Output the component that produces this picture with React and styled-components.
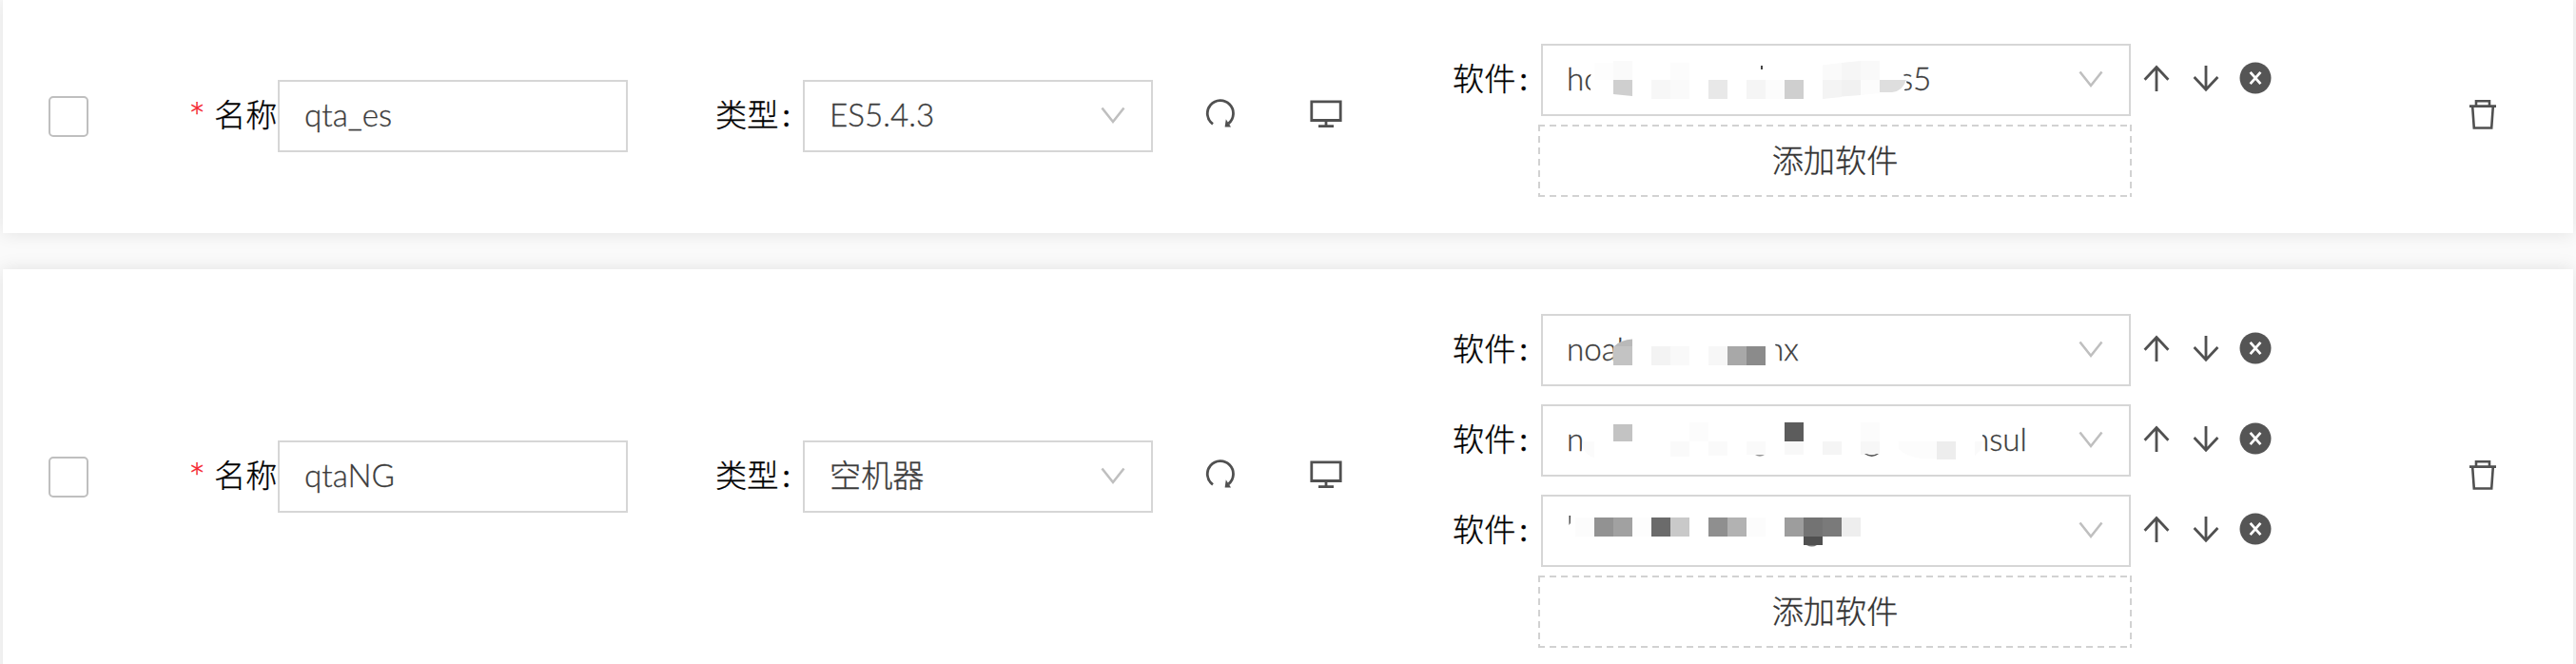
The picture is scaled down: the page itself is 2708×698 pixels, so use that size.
import React from 'react';
import styled, { createGlobalStyle } from 'styled-components';

const Global = createGlobalStyle`
  * { box-sizing: border-box; }
  html, body { margin: 0; background: #f9f9f9; }
  body { overflow: hidden; }
`;

const Page = styled.main`
  width: 2708px;
  height: 698px;
  padding: 0 3px;
  display: flex;
  flex-direction: column;
  gap: 38px;
  overflow: hidden;
  background: #fafafa;
  color: #3c3c3c;
  font-family: Lato, 'Noto Sans CJK SC', sans-serif;
  font-size: 33.2px;
  font-weight: 300;
  line-height: 40px;
  -webkit-text-stroke: 0.3px;
`;

const Card = styled.section`
  flex: none;
  height: ${(p) => p.$height}px;
  padding: 0 80px ${(p) => p.$height % 2}px 48px;
  display: flex;
  align-items: center;
  background: #fff;
  box-shadow: 0 0 18px rgba(0, 0, 0, 0.1);
`;

const Checkbox = styled.span`
  flex: none;
  width: 42px;
  height: 43px;
  margin-right: 106px;
  border: 2px solid #bfbfbf;
  border-radius: 5px;
`;

const Label = styled.label`
  flex: none;
  width: ${(p) => p.$width}px;
  padding: 0 0 5px ${(p) => p.$indent || 0}px;
  display: flex;
  white-space: pre;
  color: #000;
`;

const Required = styled.span`
  width: 27px;
  margin-left: -1px;
  padding-top: 4px;
  height: 40px;
  color: #f5222d;
  font-size: 43px;
`;

const Colon = styled.span`
  margin-left: 4px;
  font-weight: 400;
`;

const Field = styled.div`
  flex: none;
  position: relative;
  width: ${(p) => p.$width}px;
  height: 76px;
  padding: 0 27px 0 ${(p) => p.$indent || 26}px;
  display: flex;
  align-items: center;
  justify-content: space-between;
  border: 2px solid #d6d6d6;
`;

const Value = styled.span`
  white-space: pre;
  padding-bottom: 5px;
`;

const Pieces = styled.span`
  display: flex;
  white-space: pre;
  padding-bottom: 5px;
`;

const Piece = styled.span`
  flex: none;
  width: ${(p) => p.$width}px;
`;

const Mosaic = styled.svg`
  position: absolute;
  left: -2px;
  top: -2px;
  pointer-events: none;
`;

const Tools = styled.div`
  flex: none;
  display: flex;
  align-items: center;
  gap: 78px;
  width: 315px;
  padding: 0 0 6px 55px;
`;

const Software = styled.div`
  flex: none;
  display: flex;
  flex-direction: column;
  padding-top: 9px;
`;

const SoftwareRow = styled.div`
  display: flex;
  align-items: center;
  margin-bottom: ${(p) => (p.$last ? 9 : 19)}px;
`;

const RowActions = styled.div`
  display: flex;
  align-items: center;
  gap: 18px;
  padding: 0 0 4px 10px;
`;

const AddButton = styled.button`
  --dash: #d2d2d2 0 7px, transparent 7px 12px;
  width: 624px;
  height: 76px;
  margin-left: 90px;
  padding: 0 0 3px;
  border: 0;
  background:
    repeating-linear-gradient(90deg, var(--dash)) top / 100% 2px no-repeat,
    repeating-linear-gradient(90deg, var(--dash)) bottom / 100% 2px no-repeat,
    repeating-linear-gradient(180deg, var(--dash)) left / 2px 100% no-repeat,
    repeating-linear-gradient(180deg, var(--dash)) right / 2px 100% no-repeat,
    #fff;
  color: #333;
  font: inherit;
`;

const Remove = styled.div`
  margin-left: auto;
  display: flex;
  padding-bottom: 5px;
`;

const Icon = styled.svg`
  display: block;
  flex: none;
  fill: none;
  stroke: ${(p) => p.$color || '#505050'};
  stroke-width: ${(p) => p.$stroke || 2.6};
`;

const Chevron = () => (
  <Icon width="26" height="20" viewBox="0 0 26 20" $color="#bfbfbf" $stroke={2.6}>
    <path d="M1.5 1.5 L13 16 L24.5 1.5" />
  </Icon>
);

const ReloadIcon = () => (
  <Icon width="32" height="32" viewBox="0 0 32 32" $stroke={2.8}>
    <path d="M8 27.3 A13.6 13.6 0 1 1 24.4 26.8" />
    <path d="M21.8 22.2 L27 30.6 L20.6 30.6 Z" fill="#505050" stroke="none" />
  </Icon>
);

const MonitorIcon = () => (
  <Icon width="34" height="32" viewBox="0 0 34 32" $stroke={2.8}>
    <path d="M1.8 3.8 H32.2 V23.5 H1.8 Z M17 23.5 V29 M9 29.6 H25" />
  </Icon>
);

const ArrowUp = () => (
  <Icon width="34" height="34" viewBox="0 0 34 34" $stroke={2.8}>
    <path d="M17 31 V5 M4.6 18.8 L17 5.5 L29.4 18.8" />
  </Icon>
);

const ArrowDown = () => (
  <Icon width="34" height="34" viewBox="0 0 34 34" $stroke={2.8}>
    <path d="M17 4 V30 M4.6 16 L17 29.3 L29.4 16" />
  </Icon>
);

const CloseIcon = () => (
  <Icon width="34" height="34" viewBox="0 0 34 34" $color="#fff" $stroke={2.8}>
    <circle cx="17" cy="17" r="16.5" fill="#555" stroke="none" />
    <path d="M11.6 10.8 L22.4 23.2 M22.4 10.8 L11.6 23.2" />
  </Icon>
);

const TrashIcon = () => (
  <Icon width="30" height="34" viewBox="0 0 30 34">
    <path d="M1 8.6 H29 M8 8.6 V3.3 H22 V8.6 M4.2 9 L5.8 31.5 H24.2 L25.8 9" />
  </Icon>
);

// Coordinates are relative to the outer corner of the select; blocks are [x, y, w, h, colour].
const servers = [
  {
    name: 'qta_es',
    type: 'ES5.4.3',
    height: 245,
    software: [
      {
        pieces: [['ho', 350], ['s5', 40]],
        cover: 'M56 20 L150 20 H340 Q374 20 378 30 Q386 36 384 46 L374 58 H58 L54 54 Q50 46 52 34 Z',
        blocks: [
          [56, 20, 20, 18, '#fdfdfd'], [76, 18, 20, 20, '#fafafa'], [136, 20, 20, 18, '#fcfcfc'],
          [116, 38, 20, 20, '#f7f7f7'], [136, 38, 20, 20, '#fafafa'],
          [176, 38, 20, 20, '#e8e8e8'], [216, 38, 20, 20, '#f5f5f5'], [236, 38, 20, 20, '#fcfcfc'],
          [256, 38, 20, 20, '#cfcfcf'], [231, 23, 2, 4, '#444'],
        ],
        tail: [
          ['M76 38 H96 V55 L76 53 Z', '#cfcfcf'],
          ['M296 22.5 L316 20 V38 H296 Z', '#fafafa'],
          ['M316 20 L336 18 V38 H316 Z', '#f6f6f6'],
          ['M336 18 H356 V38 H336 Z', '#f9f9f9'],
          ['M296 38 H316 V56 L296 58 Z', '#f4f4f4'],
          ['M316 38 H336 V54 L316 55.5 Z', '#f1f1f1'],
          ['M336 38 H356 V52 L336 54 Z', '#fcfcfc'],
          ['M356 38 H384 Q380 50 369 51 L356 51 Z', '#dedede'],
        ],
      },
    ],
  },
  {
    name: 'qtaNG',
    type: '空机器',
    height: 436,
    software: [
      {
        pieces: [['noah', 210], ['nx', 60]],
        cover: 'M76 38 Q84 26 96 25 H238 Q250 28 250 56 H78 Q74 46 76 38 Z',
        blocks: [
          [76, 34, 20, 20, '#c3c3c3'], [116, 34, 20, 20, '#f3f3f3'], [136, 34, 20, 20, '#f9f9f9'],
          [176, 34, 20, 20, '#f7f7f7'], [196, 34, 20, 20, '#a8a8a8'], [216, 34, 20, 20, '#8b8b8b'],
        ],
        tail: [['M77 34 Q84 27 96 26.5 V34 Z', '#b9b9b9']],
      },
      {
        pieces: [['n', 426], ['nsul', 70]],
        cover: 'M45 22 H455 L464 30 V50 L440 58 H42 Z',
        blocks: [
          [76, 21, 20, 18, '#c3c3c3'], [156, 19, 20, 20, '#fcfcfc'], [256, 19, 20, 20, '#5c5c5c'],
          [336, 19, 20, 20, '#fcfcfc'], [136, 39, 20, 16, '#fafafa'], [176, 39, 20, 15, '#fafafa'],
          [216, 39, 20, 14, '#fafafa'], [256, 39, 20, 14, '#f8f8f8'], [296, 39, 20, 14, '#f5f5f5'],
          [336, 39, 20, 14, '#f7f7f7'], [416, 39, 20, 19, '#ededed'],
        ],
        tail: [
          ['M44 39 H56 V56 Q47 54 44 45 Z', '#fbfbfb'],
          ['M225 53 Q230 56.5 235 53 Z', '#999'],
          ['M340 52 Q348 58 355 52 L353 52 Q348 54.5 342 52 Z', '#555'],
          ['M376 39 H416 V57 H400 Q384 55 376 47 Z', '#fcfcfc'],
          ['M456 39 H464 L462 48 L456 54 Z', '#fafafa'],
        ],
      },
      {
        pieces: [['', 60]],
        cover: '',
        blocks: [
          [36, 24, 20, 20, '#fcfcfc'], [56, 24, 20, 20, '#929292'], [76, 24, 20, 20, '#a1a1a1'],
          [96, 24, 20, 20, '#fdfdfd'],
          [116, 24, 20, 20, '#6b6b6b'], [136, 24, 20, 20, '#c9c9c9'], [176, 24, 20, 20, '#8f8f8f'],
          [196, 24, 20, 20, '#b2b2b2'], [216, 24, 20, 20, '#fcfcfc'], [256, 24, 20, 20, '#9d9d9d'],
          [276, 24, 20, 20, '#737373'], [296, 24, 20, 20, '#7a7a7a'], [316, 24, 20, 20, '#eeeeee'],
          [276, 44, 20, 9, '#505050'],
        ],
        tail: [
          ['M29.5 22 H31 L30.8 30 L29.5 32 Z', '#444'],
          ['M279 53 Q285 56 290 53 Z', '#777'],
        ],
      },
    ],
  },
];

function SoftwareSelect({ item }) {
  return (
    <Field $width={620} $indent={25}>
      <Pieces>
        {item.pieces.map(([text, width], i) => (
          <Piece key={i} $width={width}>{text}</Piece>
        ))}
      </Pieces>
      <Mosaic width="560" height="76" viewBox="0 0 560 76">
        {item.cover && <path d={item.cover} fill="#fff" />}
        {item.blocks.map(([x, y, w, h, fill], i) => (
          <rect key={i} x={x} y={y} width={w} height={h} fill={fill} shapeRendering="crispEdges" />
        ))}
        {item.tail.map(([d, fill], i) => <path key={i} d={d} fill={fill} />)}
      </Mosaic>
      <Chevron />
    </Field>
  );
}

function ServerCard({ server }) {
  return (
    <Card $height={server.height}>
      <Checkbox />
      <Label $width={93}><Required>*</Required>名称</Label>
      <Field $width={368}><Value>{server.name}</Value></Field>
      <Label $width={184} $indent={92}>类型<Colon>:</Colon></Label>
      <Field $width={368}><Value>{server.type}</Value><Chevron /></Field>
      <Tools><ReloadIcon /><MonitorIcon /></Tools>
      <Software>
        {server.software.map((item, i) => (
          <SoftwareRow key={i} $last={i === server.software.length - 1}>
            <Label $width={93}>软件<Colon>:</Colon></Label>
            <SoftwareSelect item={item} />
            <RowActions><ArrowUp /><ArrowDown /><CloseIcon /></RowActions>
          </SoftwareRow>
        ))}
        <AddButton type="button">添加软件</AddButton>
      </Software>
      <Remove><TrashIcon /></Remove>
    </Card>
  );
}

export default function App() {
  return (
    <>
      <Global />
      <Page>
        {servers.map((server) => <ServerCard key={server.name} server={server} />)}
      </Page>
    </>
  );
}
